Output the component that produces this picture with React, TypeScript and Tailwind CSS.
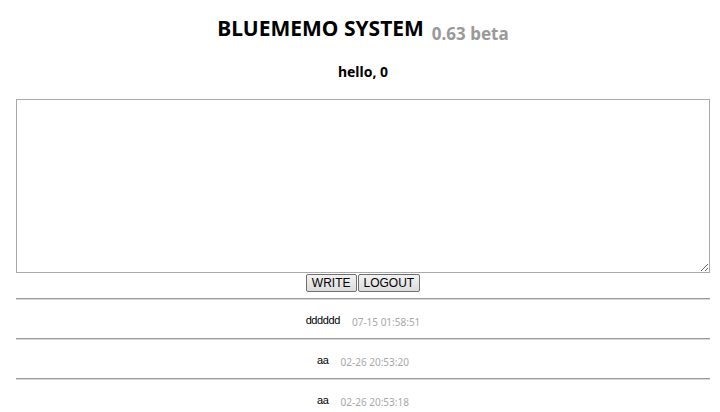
import React from "react";

const items = [
  { text: "dddddd", date: "07-15 01:58:51" },
  { text: "aa", date: "02-26 20:53:20" },
  { text: "aa", date: "02-26 20:53:18" },
];

export default function App() {
  return (
    <div className="w-[720px] h-[412px] overflow-hidden bg-white pl-[16px] pr-[10px]" style={{ fontFamily: '"Noto Sans", "Noto Sans CJK KR", sans-serif' }}>
      <div className="flex justify-center items-baseline pt-[12px] h-[52px]">
        <span className="text-[21px] font-bold text-black leading-[32px]">BLUEMEMO SYSTEM</span>
        <span className="ml-[8px] text-[17px] font-bold text-[#999] leading-[32px] relative top-[4px]">0.63 beta</span>
      </div>
      <div className="flex justify-center h-[47px] pt-[10px] text-[14px] font-bold text-black leading-[20px]">hello, 0</div>
      <textarea className="block w-full h-[174px] border border-[#a9a9a9] resize-y outline-none" />
      <div className="flex justify-center gap-[1px] h-[25px] pt-[1px]" style={{ fontFamily: '"Liberation Sans", Arial, sans-serif' }}>
        <button className="h-[18px] px-[5px] text-[12px] leading-[14px] text-black border border-[#707070] rounded-[2px] bg-gradient-to-b from-[#f2f2f2] to-[#dcdcdc]">WRITE</button>
        <button className="h-[18px] px-[5px] text-[12px] leading-[14px] text-black border border-[#707070] rounded-[2px] bg-gradient-to-b from-[#f2f2f2] to-[#dcdcdc]">LOGOUT</button>
      </div>
      {items.map((it, i) => (
        <div key={i}>
          <div className="h-[2px] border-t border-[#9a9a9a] border-b border-b-[#d8d8d8]" />
          <div className="h-[38px] flex justify-center items-center gap-[12px] pt-[2px]">
            <span className="text-[11px] tracking-[-0.4px] text-black" style={{ fontFamily: '"Liberation Sans", Arial, sans-serif' }}>{it.text}</span>
            <span className="text-[10px] text-[#a8a8a8] relative top-[2px]">{it.date}</span>
          </div>
        </div>
      ))}
    </div>
  );
}
